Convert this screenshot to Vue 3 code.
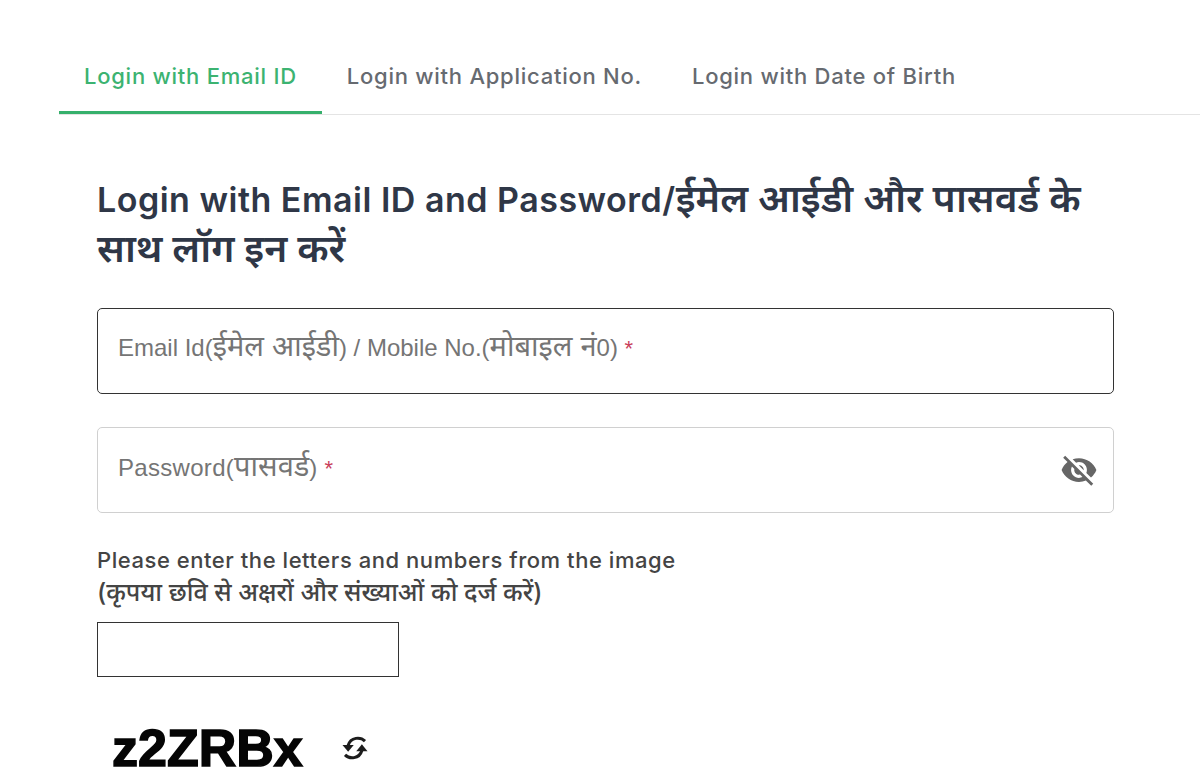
<script setup>
const tabs = [
  { label: "Login with Email ID", active: true },
  { label: "Login with Application No.", active: false },
  { label: "Login with Date of Birth", active: false },
];
</script>

<template>
  <div class="page">
    <ul class="tabs">
      <li v-for="tab in tabs" :key="tab.label" class="tab" :class="{ active: tab.active }">
        {{ tab.label }}
      </li>
    </ul>

    <form class="form" @submit.prevent>
      <h2 class="title">Login with Email ID and Password/<span class="hi">ईमेल आईडी और पासवर्ड के साथ लॉग इन करें</span></h2>

      <div class="field focused">
        <span class="hint">Email Id(<span class="hi">ईमेल आईडी</span>) / Mobile No.(<span class="hi">मोबाइल नं</span>0) <b>*</b></span>
      </div>

      <div class="field second">
        <span class="hint wide">Password(<span class="hi">पासवर्ड</span>) <b>*</b></span>
        <svg class="eye" viewBox="0 0 24 24" width="38" height="38">
          <path
            fill="#666"
            d="M12 7c2.76 0 5 2.24 5 5 0 .65-.13 1.26-.36 1.83l2.92 2.92c1.51-1.26 2.7-2.89 3.43-4.75-1.73-4.39-6-7.5-11-7.5-1.4 0-2.74.25-3.98.7l2.16 2.16C10.74 7.13 11.35 7 12 7zM2 4.27l2.28 2.28.46.46C3.08 8.3 1.78 10.02 1 12c1.73 4.39 6 7.5 11 7.5 1.55 0 3.03-.3 4.38-.84l.42.42L19.73 22 21 20.73 3.27 3 2 4.27zM7.53 9.8l1.55 1.55c-.05.21-.08.43-.08.65 0 1.66 1.34 3 3 3 .22 0 .44-.03.65-.08l1.55 1.55c-.67.33-1.41.53-2.2.53-2.76 0-5-2.24-5-5 0-.79.2-1.53.53-2.2zm4.31-.78l3.15 3.15.02-.16c0-1.66-1.34-3-3-3l-.17.01z"
          />
        </svg>
      </div>

      <p class="captcha-label">
        Please enter the letters and numbers from the image<br />
        <span class="hi">(कृपया छवि से अक्षरों और संख्याओं को दर्ज करें)</span>
      </p>
      <div class="captcha-input"></div>

      <div class="captcha-row">
        <span class="captcha-text">z2ZRBx</span>
        <svg class="refresh" viewBox="0 0 24 24" width="30" height="30" fill="none" stroke="#1c1c1c" stroke-width="2.4">
          <path d="M20 6.5C16.5 3 8.5 3 6.5 10" />
          <path d="M4 17.5C7.5 21 15.5 21 17.5 14" />
          <path d="M2 9.5h9l-4.5 5.5z" fill="#1c1c1c" stroke="none" />
          <path d="M13 14.5h9l-4.5-5.5z" fill="#1c1c1c" stroke="none" />
        </svg>
      </div>
    </form>
  </div>
</template>

<style scoped>
.page {
  height: 768px;
  overflow: hidden;
  padding: 38px 0 0 59px;
  box-sizing: border-box;
  background: #fff;
  font-family: Inter, "Noto Sans", "Noto Sans Devanagari", sans-serif;
}

.tabs {
  display: flex;
  margin: 0;
  padding: 0;
  list-style: none;
  border-bottom: 1px solid #e4e4e4;
}

.tab {
  padding: 0 25px;
  height: 76px;
  line-height: 76px;
  font-size: 22px;
  font-weight: 500;
  letter-spacing: 0.75px;
  color: #666a70;
  white-space: nowrap;
  box-sizing: border-box;
}

.tab.active {
  color: #3cb371;
  border-bottom: 3px solid #36b06c;
  margin-bottom: -1px;
}

.form {
  width: 1017px;
  padding: 60px 0 0 38px;
}

.title {
  margin: 0 0 33px;
  width: 1000px;
  font-size: 34px;
  line-height: 50px;
  font-weight: 600;
  letter-spacing: 0.5px;
  color: #2f3747;
}

.title .hi {
  font-size: 39px;
  line-height: 38px;
  letter-spacing: 0;
}

.field {
  position: relative;
  height: 86px;
  box-sizing: border-box;
  border: 1px solid #d0d0d0;
  border-radius: 5px;
  padding: 21px 20px 0;
}

.field.focused {
  border-color: #333;
  margin-bottom: 33px;
}

.field.second {
  padding-top: 22px;
}

.hint {
  font-family: "Liberation Sans", "Noto Sans", sans-serif;
  font-size: 24px;
  line-height: 36px;
  color: #757575;
}

.hint.wide {
  letter-spacing: 0.3px;
}

.hint .hi {
  font-size: 29px;
  line-height: 24px;
  letter-spacing: 0;
}

.hint b {
  font-weight: 400;
  font-size: 22px;
  color: #c9405a;
}

.eye {
  position: absolute;
  right: 15px;
  top: 23px;
}

.captcha-label {
  margin: 31px 0 12px;
  font-size: 22px;
  line-height: 33px;
  font-weight: 500;
  letter-spacing: 0.55px;
  color: #444;
}

.captcha-label .hi {
  font-size: 25px;
  line-height: 30px;
  letter-spacing: 0;
  font-weight: 500;
}

.captcha-input {
  width: 302px;
  height: 55px;
  box-sizing: border-box;
  border: 1px solid #333;
}

.captcha-row {
  display: flex;
  align-items: center;
  gap: 37px;
  margin-top: 45px;
  padding-left: 15px;
}

.captcha-text {
  font-family: "Liberation Sans", sans-serif;
  font-weight: 700;
  font-size: 52px;
  line-height: 52px;
  color: #050505;
  -webkit-text-stroke: 1.5px #050505;
}
</style>
